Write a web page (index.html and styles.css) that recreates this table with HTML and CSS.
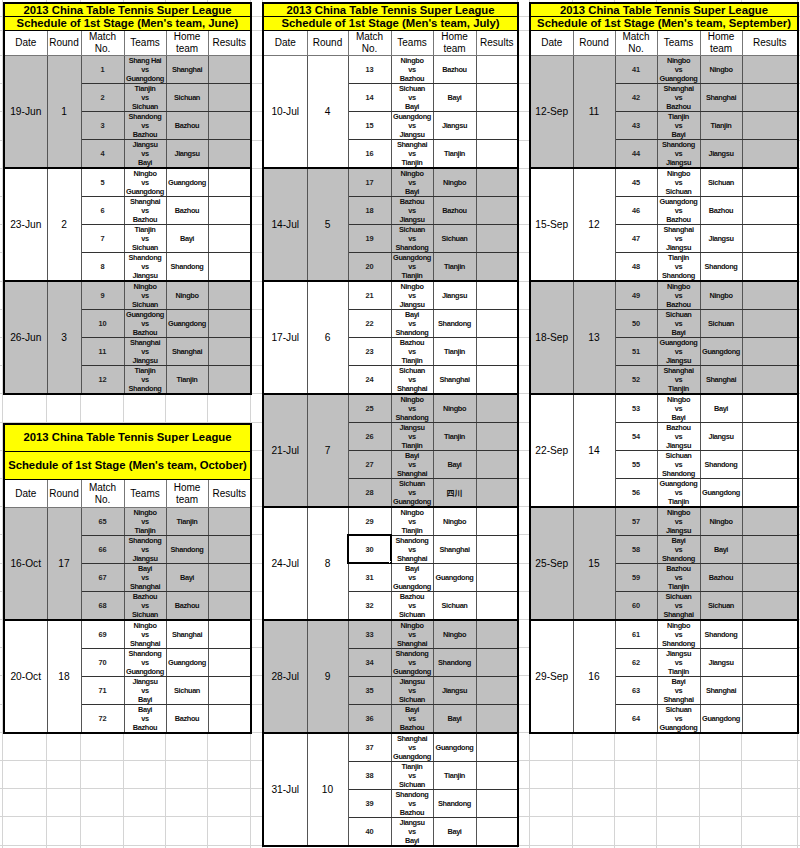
FILE: index.html
```html
<!DOCTYPE html>
<html lang="en">
<head>
<meta charset="utf-8">
<title>2013 China Table Tennis Super League</title>
<link rel="stylesheet" href="styles.css">
</head>
<body>
<div class="sheet">
  <div class="col-left">
    <table class="sched w-left">
      <colgroup><col class="c43"><col class="c34"><col class="c43"><col class="c42"><col class="c42"><col class="c43"></colgroup>
      <thead>
        <tr class="t1"><td colspan="6">2013 China Table Tennis Super League</td></tr>
        <tr class="t2"><td colspan="6">Schedule of 1st Stage (Men's team, June)</td></tr>
        <tr class="hd"><td>Date</td><td>Round</td><td>Match<br>No.</td><td>Teams</td><td>Home<br>team</td><td>Results</td></tr>
      </thead>
      <tbody class="gray">
        <tr><td class="d" rowspan="4">19-Jun</td><td class="rd" rowspan="4">1</td><td class="n">1</td><td class="t">Shang Hai<br>vs<br>Guangdong</td><td class="h">Shanghai</td><td></td></tr>
        <tr><td class="n">2</td><td class="t">Tianjin<br>vs<br>Sichuan</td><td class="h">Sichuan</td><td></td></tr>
        <tr><td class="n">3</td><td class="t">Shandong<br>vs<br>Bazhou</td><td class="h">Bazhou</td><td></td></tr>
        <tr><td class="n">4</td><td class="t">Jiangsu<br>vs<br>Bayi</td><td class="h">Jiangsu</td><td></td></tr>
      </tbody>
      <tbody>
        <tr><td class="d" rowspan="4">23-Jun</td><td class="rd" rowspan="4">2</td><td class="n">5</td><td class="t">Ningbo<br>vs<br>Guangdong</td><td class="h">Guangdong</td><td></td></tr>
        <tr><td class="n">6</td><td class="t">Shanghai<br>vs<br>Bazhou</td><td class="h">Bazhou</td><td></td></tr>
        <tr><td class="n">7</td><td class="t">Tianjin<br>vs<br>Sichuan</td><td class="h">Bayi</td><td></td></tr>
        <tr><td class="n">8</td><td class="t">Shandong<br>vs<br>Jiangsu</td><td class="h">Shandong</td><td></td></tr>
      </tbody>
      <tbody class="gray">
        <tr><td class="d" rowspan="4">26-Jun</td><td class="rd" rowspan="4">3</td><td class="n">9</td><td class="t">Ningbo<br>vs<br>Sichuan</td><td class="h">Ningbo</td><td></td></tr>
        <tr><td class="n">10</td><td class="t">Guangdong<br>vs<br>Bazhou</td><td class="h">Guangdong</td><td></td></tr>
        <tr><td class="n">11</td><td class="t">Shanghai<br>vs<br>Jiangsu</td><td class="h">Shanghai</td><td></td></tr>
        <tr><td class="n">12</td><td class="t">Tianjin<br>vs<br>Shandong</td><td class="h">Tianjin</td><td></td></tr>
      </tbody>
    </table>

    <table class="sched oct">
      <colgroup><col class="c43"><col class="c34"><col class="c43"><col class="c42"><col class="c42"><col class="c43"></colgroup>
      <thead>
        <tr class="t1"><td colspan="6">2013 China Table Tennis Super League</td></tr>
        <tr class="t2"><td colspan="6">Schedule of 1st Stage (Men's team, October)</td></tr>
        <tr class="hd"><td>Date</td><td>Round</td><td>Match<br>No.</td><td>Teams</td><td>Home<br>team</td><td>Results</td></tr>
      </thead>
      <tbody class="gray">
        <tr><td class="d" rowspan="4">16-Oct</td><td class="rd" rowspan="4">17</td><td class="n">65</td><td class="t">Ningbo<br>vs<br>Tianjin</td><td class="h">Tianjin</td><td></td></tr>
        <tr><td class="n">66</td><td class="t">Shandong<br>vs<br>Jiangsu</td><td class="h">Shandong</td><td></td></tr>
        <tr><td class="n">67</td><td class="t">Bayi<br>vs<br>Shanghai</td><td class="h">Bayi</td><td></td></tr>
        <tr><td class="n">68</td><td class="t">Bazhou<br>vs<br>Sichuan</td><td class="h">Bazhou</td><td></td></tr>
      </tbody>
      <tbody>
        <tr><td class="d" rowspan="4">20-Oct</td><td class="rd" rowspan="4">18</td><td class="n">69</td><td class="t">Ningbo<br>vs<br>Shanghai</td><td class="h">Shanghai</td><td></td></tr>
        <tr><td class="n">70</td><td class="t">Shandong<br>vs<br>Guangdong</td><td class="h">Guangdong</td><td></td></tr>
        <tr><td class="n">71</td><td class="t">Jiangsu<br>vs<br>Bayi</td><td class="h">Sichuan</td><td></td></tr>
        <tr><td class="n">72</td><td class="t">Bayi<br>vs<br>Bazhou</td><td class="h">Bazhou</td><td></td></tr>
      </tbody>
    </table>
  </div>

  <table class="sched w-mid">
    <colgroup><col class="c44"><col class="c41"><col class="c43"><col class="c42"><col class="c43"><col class="c42"></colgroup>
    <thead>
      <tr class="t1"><td colspan="6">2013 China Table Tennis Super League</td></tr>
      <tr class="t2"><td colspan="6">Schedule of 1st Stage (Men's team, July)</td></tr>
      <tr class="hd"><td>Date</td><td>Round</td><td>Match<br>No.</td><td>Teams</td><td>Home<br>team</td><td>Results</td></tr>
    </thead>
    <tbody>
      <tr><td class="d" rowspan="4">10-Jul</td><td class="rd" rowspan="4">4</td><td class="n">13</td><td class="t">Ningbo<br>vs<br>Bazhou</td><td class="h">Bazhou</td><td></td></tr>
      <tr><td class="n">14</td><td class="t">Sichuan<br>vs<br>Bayi</td><td class="h">Bayi</td><td></td></tr>
      <tr><td class="n">15</td><td class="t">Guangdong<br>vs<br>Jiangsu</td><td class="h">Jiangsu</td><td></td></tr>
      <tr><td class="n">16</td><td class="t">Shanghai<br>vs<br>Tianjin</td><td class="h">Tianjin</td><td></td></tr>
    </tbody>
    <tbody class="gray">
      <tr><td class="d" rowspan="4">14-Jul</td><td class="rd" rowspan="4">5</td><td class="n">17</td><td class="t">Ningbo<br>vs<br>Bayi</td><td class="h">Ningbo</td><td></td></tr>
      <tr><td class="n">18</td><td class="t">Bazhou<br>vs<br>Jiangsu</td><td class="h">Bazhou</td><td></td></tr>
      <tr><td class="n">19</td><td class="t">Sichuan<br>vs<br>Shandong</td><td class="h">Sichuan</td><td></td></tr>
      <tr><td class="n">20</td><td class="t">Guangdong<br>vs<br>Tianjin</td><td class="h">Tianjin</td><td></td></tr>
    </tbody>
    <tbody>
      <tr><td class="d" rowspan="4">17-Jul</td><td class="rd" rowspan="4">6</td><td class="n">21</td><td class="t">Ningbo<br>vs<br>Jiangsu</td><td class="h">Jiangsu</td><td></td></tr>
      <tr><td class="n">22</td><td class="t">Bayi<br>vs<br>Shandong</td><td class="h">Shandong</td><td></td></tr>
      <tr><td class="n">23</td><td class="t">Bazhou<br>vs<br>Tianjin</td><td class="h">Tianjin</td><td></td></tr>
      <tr><td class="n">24</td><td class="t">Sichuan<br>vs<br>Shanghai</td><td class="h">Shanghai</td><td></td></tr>
    </tbody>
    <tbody class="gray">
      <tr><td class="d" rowspan="4">21-Jul</td><td class="rd" rowspan="4">7</td><td class="n">25</td><td class="t">Ningbo<br>vs<br>Shandong</td><td class="h">Ningbo</td><td></td></tr>
      <tr><td class="n">26</td><td class="t">Jiangsu<br>vs<br>Tianjin</td><td class="h">Tianjin</td><td></td></tr>
      <tr><td class="n">27</td><td class="t">Bayi<br>vs<br>Shanghai</td><td class="h">Bayi</td><td></td></tr>
      <tr><td class="n">28</td><td class="t">Sichuan<br>vs<br>Guangdong</td><td class="h cjk">四川</td><td></td></tr>
    </tbody>
    <tbody>
      <tr><td class="d" rowspan="4">24-Jul</td><td class="rd" rowspan="4">8</td><td class="n">29</td><td class="t">Ningbo<br>vs<br>Tianjin</td><td class="h">Ningbo</td><td></td></tr>
      <tr><td class="n sel">30</td><td class="t">Shandong<br>vs<br>Shanghai</td><td class="h">Shanghai</td><td></td></tr>
      <tr><td class="n">31</td><td class="t">Bayi<br>vs<br>Guangdong</td><td class="h">Guangdong</td><td></td></tr>
      <tr><td class="n">32</td><td class="t">Bazhou<br>vs<br>Sichuan</td><td class="h">Sichuan</td><td></td></tr>
    </tbody>
    <tbody class="gray">
      <tr><td class="d" rowspan="4">28-Jul</td><td class="rd" rowspan="4">9</td><td class="n">33</td><td class="t">Ningbo<br>vs<br>Shanghai</td><td class="h">Ningbo</td><td></td></tr>
      <tr><td class="n">34</td><td class="t">Shandong<br>vs<br>Guangdong</td><td class="h">Shandong</td><td></td></tr>
      <tr><td class="n">35</td><td class="t">Jiangsu<br>vs<br>Sichuan</td><td class="h">Jiangsu</td><td></td></tr>
      <tr><td class="n">36</td><td class="t">Bayi<br>vs<br>Bazhou</td><td class="h">Bayi</td><td></td></tr>
    </tbody>
    <tbody>
      <tr><td class="d" rowspan="4">31-Jul</td><td class="rd" rowspan="4">10</td><td class="n">37</td><td class="t">Shanghai<br>vs<br>Guangdong</td><td class="h">Guangdong</td><td></td></tr>
      <tr><td class="n">38</td><td class="t">Tianjin<br>vs<br>Sichuan</td><td class="h">Tianjin</td><td></td></tr>
      <tr><td class="n">39</td><td class="t">Shandong<br>vs<br>Bazhou</td><td class="h">Shandong</td><td></td></tr>
      <tr><td class="n">40</td><td class="t">Jiangsu<br>vs<br>Bayi</td><td class="h">Bayi</td><td></td></tr>
    </tbody>
  </table>

  <table class="sched w-right">
    <colgroup><col class="c43"><col class="c42"><col class="c42"><col class="c43"><col class="c42"><col class="c56"></colgroup>
    <thead>
      <tr class="t1"><td colspan="6">2013 China Table Tennis Super League</td></tr>
      <tr class="t2"><td colspan="6">Schedule of 1st Stage (Men's team, September)</td></tr>
      <tr class="hd"><td>Date</td><td>Round</td><td>Match<br>No.</td><td>Teams</td><td>Home<br>team</td><td>Results</td></tr>
    </thead>
    <tbody class="gray">
      <tr><td class="d" rowspan="4">12-Sep</td><td class="rd" rowspan="4">11</td><td class="n">41</td><td class="t">Ningbo<br>vs<br>Guangdong</td><td class="h">Ningbo</td><td></td></tr>
      <tr><td class="n">42</td><td class="t">Shanghai<br>vs<br>Bazhou</td><td class="h">Shanghai</td><td></td></tr>
      <tr><td class="n">43</td><td class="t">Tianjin<br>vs<br>Bayi</td><td class="h">Tianjin</td><td></td></tr>
      <tr><td class="n">44</td><td class="t">Shandong<br>vs<br>Jiangsu</td><td class="h">Jiangsu</td><td></td></tr>
    </tbody>
    <tbody>
      <tr><td class="d" rowspan="4">15-Sep</td><td class="rd" rowspan="4">12</td><td class="n">45</td><td class="t">Ningbo<br>vs<br>Sichuan</td><td class="h">Sichuan</td><td></td></tr>
      <tr><td class="n">46</td><td class="t">Guangdong<br>vs<br>Bazhou</td><td class="h">Bazhou</td><td></td></tr>
      <tr><td class="n">47</td><td class="t">Shanghai<br>vs<br>Jiangsu</td><td class="h">Jiangsu</td><td></td></tr>
      <tr><td class="n">48</td><td class="t">Tianjin<br>vs<br>Shandong</td><td class="h">Shandong</td><td></td></tr>
    </tbody>
    <tbody class="gray">
      <tr><td class="d" rowspan="4">18-Sep</td><td class="rd" rowspan="4">13</td><td class="n">49</td><td class="t">Ningbo<br>vs<br>Bazhou</td><td class="h">Ningbo</td><td></td></tr>
      <tr><td class="n">50</td><td class="t">Sichuan<br>vs<br>Bayi</td><td class="h">Sichuan</td><td></td></tr>
      <tr><td class="n">51</td><td class="t">Guangdong<br>vs<br>Jiangsu</td><td class="h">Guangdong</td><td></td></tr>
      <tr><td class="n">52</td><td class="t">Shanghai<br>vs<br>Tianjin</td><td class="h">Shanghai</td><td></td></tr>
    </tbody>
    <tbody>
      <tr><td class="d" rowspan="4">22-Sep</td><td class="rd" rowspan="4">14</td><td class="n">53</td><td class="t">Ningbo<br>vs<br>Bayi</td><td class="h">Bayi</td><td></td></tr>
      <tr><td class="n">54</td><td class="t">Bazhou<br>vs<br>Jiangsu</td><td class="h">Jiangsu</td><td></td></tr>
      <tr><td class="n">55</td><td class="t">Sichuan<br>vs<br>Shandong</td><td class="h">Shandong</td><td></td></tr>
      <tr><td class="n">56</td><td class="t">Guangdong<br>vs<br>Tianjin</td><td class="h">Guangdong</td><td></td></tr>
    </tbody>
    <tbody class="gray">
      <tr><td class="d" rowspan="4">25-Sep</td><td class="rd" rowspan="4">15</td><td class="n">57</td><td class="t">Ningbo<br>vs<br>Jiangsu</td><td class="h">Ningbo</td><td></td></tr>
      <tr><td class="n">58</td><td class="t">Bayi<br>vs<br>Shandong</td><td class="h">Bayi</td><td></td></tr>
      <tr><td class="n">59</td><td class="t">Bazhou<br>vs<br>Tianjin</td><td class="h">Bazhou</td><td></td></tr>
      <tr><td class="n">60</td><td class="t">Sichuan<br>vs<br>Shanghai</td><td class="h">Sichuan</td><td></td></tr>
    </tbody>
    <tbody>
      <tr><td class="d" rowspan="4">29-Sep</td><td class="rd" rowspan="4">16</td><td class="n">61</td><td class="t">Ningbo<br>vs<br>Shandong</td><td class="h">Shandong</td><td></td></tr>
      <tr><td class="n">62</td><td class="t">Jiangsu<br>vs<br>Tianjin</td><td class="h">Jiangsu</td><td></td></tr>
      <tr><td class="n">63</td><td class="t">Bayi<br>vs<br>Shanghai</td><td class="h">Shanghai</td><td></td></tr>
      <tr><td class="n">64</td><td class="t">Sichuan<br>vs<br>Guangdong</td><td class="h">Guangdong</td><td></td></tr>
    </tbody>
  </table>
</div>
</body>
</html>
```

FILE: styles.css
```css
html, body {
  margin: 0;
  padding: 0;
  background: #fff;
}

.sheet {
  width: 800px;
  height: 848px;
  overflow: hidden;
  box-sizing: border-box;
  padding: 2px 3px 0 3px;
  display: grid;
  grid-template-columns: 247px 255px 268px;
  column-gap: 12px;
  align-items: start;
  background-color: #fff;
  background-image:
    linear-gradient(#d4d4d4, #d4d4d4),
    linear-gradient(#d4d4d4, #d4d4d4),
    linear-gradient(#d4d4d4, #d4d4d4),
    linear-gradient(#d4d4d4, #d4d4d4),
    linear-gradient(#d4d4d4, #d4d4d4),
    linear-gradient(#d4d4d4, #d4d4d4),
    linear-gradient(#d4d4d4, #d4d4d4),
    linear-gradient(#d4d4d4, #d4d4d4),
    linear-gradient(#d4d4d4, #d4d4d4),
    linear-gradient(#d4d4d4, #d4d4d4),
    linear-gradient(#d4d4d4, #d4d4d4),
    linear-gradient(#d4d4d4, #d4d4d4),
    linear-gradient(#d4d4d4, #d4d4d4),
    linear-gradient(#d4d4d4, #d4d4d4),
    linear-gradient(#d4d4d4, #d4d4d4),
    linear-gradient(#d4d4d4, #d4d4d4),
    linear-gradient(#d4d4d4, #d4d4d4),
    linear-gradient(#d4d4d4, #d4d4d4),
    repeating-linear-gradient(to bottom, #d4d4d4 0, #d4d4d4 1px, transparent 1px, transparent 28.2px);
  background-repeat: no-repeat;
  background-size:
    1px 100%, 1px 100%, 1px 100%, 1px 100%, 1px 100%, 1px 100%,
    1px 100%, 1px 100%, 1px 100%, 1px 100%, 1px 100%, 1px 100%,
    1px 100%, 1px 100%, 1px 100%, 1px 100%,
    100% 1px, 100% 1px,
    100% 820px;
  background-position:
    2px 0, 46px 0, 80px 0, 123px 0, 165px 0, 207px 0,
    250px 0, 262px 0, 517px 0, 529px 0, 572px 0, 614px 0,
    656px 0, 699px 0, 741px 0, 797px 0,
    0 16px, 0 30px,
    0 55px;
}

.col-left {
  display: flex;
  flex-direction: column;
  gap: 28px;
}

.sched {
  width: 100%;
  border-collapse: collapse;
  table-layout: fixed;
  border: 2px solid #000;
  font-family: "Liberation Sans", Arial, sans-serif;
  color: #000;
}

.c34 { width: 34px; }
.c41 { width: 41px; }
.c42 { width: 42px; }
.c43 { width: 43px; }
.c44 { width: 44px; }
.c56 { width: 56px; }

.sched td {
  padding: 0;
  text-align: center;
  vertical-align: middle;
  border: 1px solid #555;
  overflow: hidden;
  white-space: nowrap;
  background: #fff;
}

.sched .t1 td,
.sched .t2 td {
  background: #ffff00;
  font-weight: bold;
  font-size: 11.3px;
  line-height: 11px;
  border-color: #000;
}

.sched tr.t1,
.sched tr.t2 { height: 13.6px; }
.sched tr.hd { height: 25px; }

.sched .hd td {
  font-size: 10px;
  line-height: 12px;
  border-color: #777;
}

.oct tr.t1,
.oct tr.t2,
.oct tr.hd { height: 28px; }

.sched tbody tr { height: 28px; }

.sched tbody tr:first-child td {
  border-top: 2px solid #000;
}

.sched thead + tbody tr:first-child td {
  border-top-width: 1px;
}

.sched tbody td {
  border-bottom: 1px solid #333;
}

.sched tbody.gray td {
  background: #c0c0c0;
}

.sched .d,
.sched .rd {
  font-size: 10.2px;
}

.sched .n,
.sched .t,
.sched .h {
  font-family: "Liberation Sans", Arial, sans-serif;
  font-weight: bold;
  font-size: 7.4px;
  letter-spacing: -0.4px;
  line-height: 9px;
  color: #111;
}

.sched .n {
  font-size: 7.4px;
  letter-spacing: 0;
  color: #222;
}

.sched .cjk {
  font-family: "Noto Sans CJK SC", sans-serif;
  font-size: 8px;
  letter-spacing: 0;
}

.sched td.sel {
  position: relative;
  outline: 2px solid #000;
  outline-offset: -1px;
}

.sched td.sel::after {
  content: "";
  position: absolute;
  right: -3px;
  bottom: -3px;
  width: 3px;
  height: 3px;
  background: #000;
  border: 1px solid #fff;
}
```
